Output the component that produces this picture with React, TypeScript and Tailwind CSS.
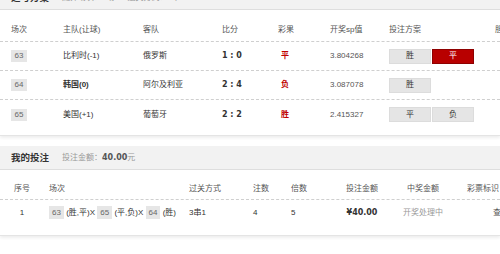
import { ReactNode } from "react";

const cjk = "font-['Liberation_Sans','Noto_Sans_CJK_SC',sans-serif]";
const numBold = "font-['DejaVu_Sans','Noto_Sans_CJK_SC',sans-serif] font-bold";

type Match = {
    no: string;
    home: string;
    homeBold?: boolean;
    away: string;
    score: string;
    result: string;
    sp: string;
    picks: { label: string; on?: boolean }[];
};

const matches: Match[] = [
    {
        no: "63",
        home: "比利时(-1)",
        away: "俄罗斯",
        score: "1 : 0",
        result: "平",
        sp: "3.804268",
        picks: [{ label: "胜" }, { label: "平", on: true }]
    },
    {
        no: "64",
        home: "韩国(0)",
        homeBold: true,
        away: "阿尔及利亚",
        score: "2 : 4",
        result: "负",
        sp: "3.087078",
        picks: [{ label: "胜" }]
    },
    {
        no: "65",
        home: "美国(+1)",
        away: "葡萄牙",
        score: "2 : 2",
        result: "胜",
        sp: "2.415327",
        picks: [{ label: "平" }, { label: "负" }]
    }
];

function Badge({ children }: { children: ReactNode }) {
    return <span className="bg-[#e6e6e6] text-[#666] px-[3px] py-[2px]">{children}</span>;
}

function PickButton({ label, on }: { label: string; on?: boolean }) {
    return (
        <div
            className={
                on
                    ? "w-[42px] h-[15px] flex items-center justify-center bg-[#b80000] border border-[#8e0000] text-white"
                    : "w-[42px] h-[15px] flex items-center justify-center bg-[#e5e5e5] border border-[#dcdcdc] text-[#333]"
            }
        >
            {label}
        </div>
    );
}

const topCols = "grid grid-cols-[52px_80px_79px_56px_52px_59px_106px_1fr] pl-[11px] items-center";
const bottomCols = "grid grid-cols-[44px_145px_64px_38px_41px_60px_62px_1fr] items-center";

export default function App() {
    return (
        <div className={`w-[500px] h-[254px] overflow-hidden bg-white text-[8px] leading-none text-[#333] ${cjk}`}>
            {/* 选号方案 */}
            <div className="-mt-[14px] bg-white border-b border-[#e4e4e4] shadow-[0_2px_3px_rgba(0,0,0,0.07)]">
                <div className="h-[24px] bg-[#f2f2f2] border-b border-[#dedede] flex items-center pl-[11px] gap-[13px]">
                    <span className="text-[9.5px] font-bold text-[#333]">选号方案</span>
                    <span className="text-[#999]">选择场次：3场</span>
                    <span className="text-[#999]">过关方式：3串1</span>
                </div>

                <div className="pt-[8px] pb-[6px] whitespace-nowrap">
                    <div className={`${topCols} h-[24px] border-b border-dashed border-[#cfcfcf] text-[#555]`}>
                        <span>场次</span>
                        <span>主队(让球)</span>
                        <span>客队</span>
                        <span>比分</span>
                        <span>彩果</span>
                        <span>开奖sp值</span>
                        <span>投注方案</span>
                        <span>胆</span>
                    </div>
                    {matches.map((m, i) => (
                        <div
                            key={m.no}
                            className={`${topCols} h-[29px] ${i < matches.length - 1 ? "border-b border-dashed border-[#cfcfcf]" : ""}`}
                        >
                            <span>
                                <span className="inline-block bg-[#e6e6e6] text-[#666] w-[16px] h-[12px] leading-[12px] text-center">
                                    {m.no}
                                </span>
                            </span>
                            <span className={m.homeBold ? "font-bold" : ""}>{m.home}</span>
                            <span>{m.away}</span>
                            <span className={`${numBold} text-[#333]`}>{m.score}</span>
                            <span className="pl-[3px] text-[#c00000] font-bold">{m.result}</span>
                            <span className="text-[#555]">{m.sp}</span>
                            <div className="flex gap-[1px]">
                                {m.picks.map((p) => (
                                    <PickButton key={p.label} label={p.label} on={p.on} />
                                ))}
                            </div>
                            <span></span>
                        </div>
                    ))}
                </div>
            </div>

            {/* 我的投注 */}
            <div className="mt-[10px] bg-white border-b border-[#e4e4e4] shadow-[0_2px_3px_rgba(0,0,0,0.07)]">
                <div className="h-[24px] bg-[#f2f2f2] border-b border-[#dedede] flex items-center pl-[11px] gap-[13px]">
                    <span className="text-[9.5px] font-bold text-[#333]">我的投注</span>
                    <span className="text-[#999]">
                        投注金额：<span className={`${numBold} text-[#555]`}>40.00</span>元
                    </span>
                </div>

                <div className="pt-[8px] pb-[9px] whitespace-nowrap">
                    <div className={`${bottomCols} h-[22px] border-b border-dashed border-[#cfcfcf] text-[#555]`}>
                        <span className="text-center">序号</span>
                        <span className="pl-[5px]">场次</span>
                        <span>过关方式</span>
                        <span>注数</span>
                        <span>倍数</span>
                        <span className="text-center">投注金额</span>
                        <span className="text-center">中奖金额</span>
                        <span className="pl-[13px]">彩票标识</span>
                    </div>
                    <div className={`${bottomCols} h-[26px]`}>
                        <span className="text-center">1</span>
                        <span className="pl-[5px]">
                            <Badge>63</Badge> (胜,平)X <Badge>65</Badge> (平,负)X <Badge>64</Badge> (胜)
                        </span>
                        <span>3串1</span>
                        <span>4</span>
                        <span>5</span>
                        <span className={`${numBold} text-center text-[#333]`}>¥40.00</span>
                        <span className="text-center text-[#999]">开奖处理中</span>
                        <span className="pl-[39px] text-[#555]">查看</span>
                    </div>
                </div>
            </div>
        </div>
    );
}
